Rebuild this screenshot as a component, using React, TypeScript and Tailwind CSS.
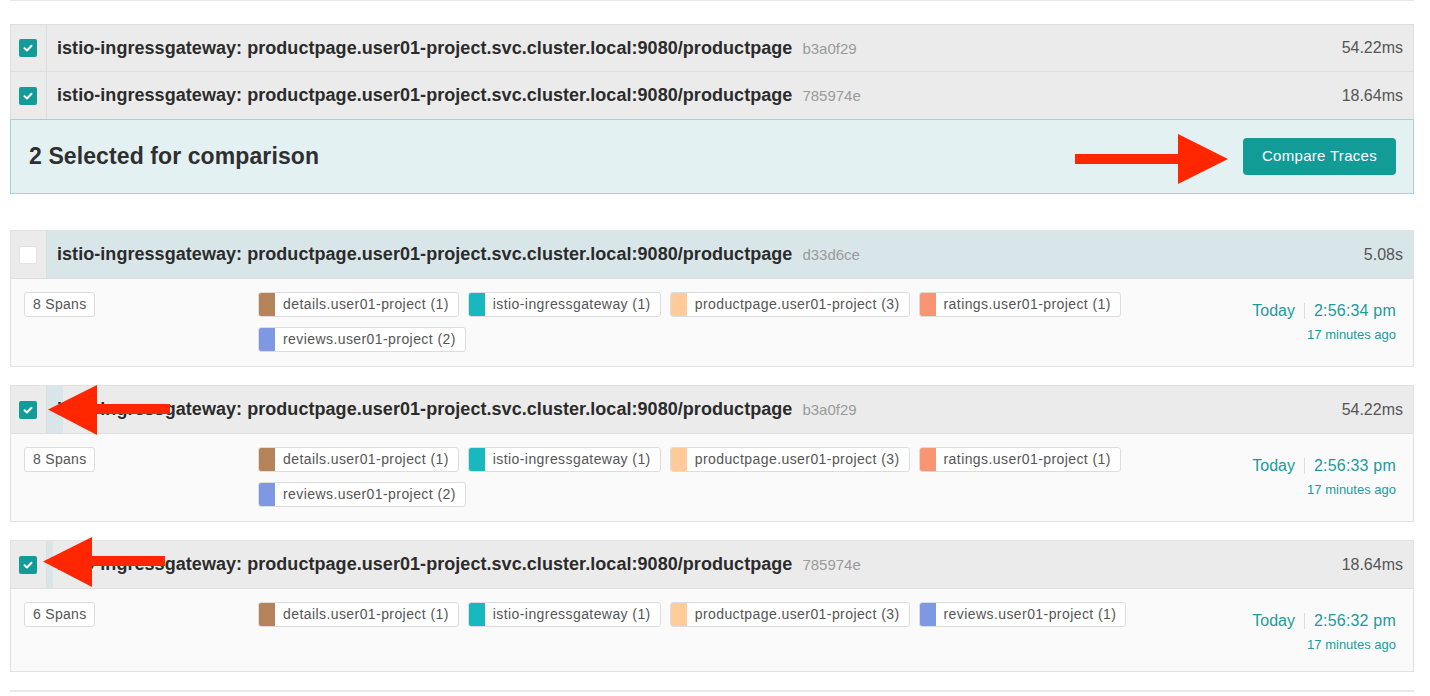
import React from "react";

const FONT = { fontFamily: '"Liberation Sans", Arial, sans-serif' };

type Tag = { name: string; color: string };

function Checkbox({ checked }: { checked: boolean }) {
  if (!checked)
    return <div className="w-[18px] h-[18px] rounded-[2px] bg-white border border-[#e2e2e2]" />;
  return (
    <div className="w-[18px] h-[18px] rounded-[2px] bg-[#139b98] flex items-center justify-center">
      <svg width="12" height="12" viewBox="0 0 12 12">
        <polyline points="2.5,6.2 5,8.5 9.5,3.8" fill="none" stroke="white" strokeWidth="2" strokeLinecap="round" strokeLinejoin="round" />
      </svg>
    </div>
  );
}

function HeaderRow({
  checked,
  hash,
  duration,
  titleBg,
  strip,
  tall = false,
  borderBottom = true,
}: {
  checked: boolean;
  hash: string;
  duration: string;
  titleBg: string;
  strip?: number;
  tall?: boolean;
  borderBottom?: boolean;
}) {
  return (
    <div className={`flex ${tall ? "h-[48px]" : "h-[47px]"} ${borderBottom ? "border-b border-[#dedede]" : ""}`}>
      <div className="w-[36px] shrink-0 bg-[#ebebeb] border-r border-[#dedede] flex items-center pl-[8px]">
        <Checkbox checked={checked} />
      </div>
      <div className={`relative flex-1 flex items-center pl-[10px] pr-[10px] ${titleBg}`}>
        {strip ? <div className="absolute left-0 top-0 bottom-0 bg-[#d9e6e9]" style={{ width: strip }} /> : null}
        <span className="relative text-[18px] font-semibold text-[#2b2b2b] tracking-[0.05px]">
          istio-ingressgateway: productpage.user01-project.svc.cluster.local:9080/productpage
        </span>
        <span className="relative ml-[10px] text-[15px] text-[#9a9a9a] mt-[2px]">{hash}</span>
        <span className="relative ml-auto text-[16px] text-[#555]">{duration}</span>
      </div>
    </div>
  );
}

function TagChip({ t }: { t: Tag }) {
  return (
    <div className="flex h-[25px] rounded-[3px] border border-[#dddddd] bg-white overflow-hidden">
      <div className="w-[16px] h-full" style={{ backgroundColor: t.color }} />
      <div className="flex items-center pl-[8px] pr-[9px] text-[14px] tracking-[0.42px] text-[#555]">{t.name}</div>
    </div>
  );
}

function Body({ spans, tags, time }: { spans: string; tags: Tag[]; time: string }) {
  return (
    <div className="flex bg-[#fafafa] pl-[13px] pr-[17px] pt-[13px] pb-[14px]">
      <div className="w-[234px] shrink-0">
        <div className="inline-flex items-center h-[25px] px-[8px] rounded-[3px] border border-[#dddddd] bg-white text-[14px] tracking-[0.3px] text-[#555]">
          {spans}
        </div>
      </div>
      <div className="w-[900px] flex flex-wrap gap-x-[9px] gap-y-[10px] content-start">
        {tags.map((t) => (
          <TagChip key={t.name} t={t} />
        ))}
      </div>
      <div className="ml-auto flex flex-col items-end pt-[8px] pb-[3px]">
        <div className="flex items-center leading-[22px] text-[16px] text-[#1b9a9e]">
          <span>Today</span>
          <span className="mx-[9px] w-px h-[16px] bg-[#dcdcdc]" />
          <span className="tracking-[0.2px]">{time}</span>
        </div>
        <div className="mt-[4px] leading-[18px] text-[13px] text-[#1b9a9e]">17 minutes ago</div>
      </div>
    </div>
  );
}

const C = {
  details: "#b5835a",
  istio: "#17b8be",
  product: "#ffcb99",
  ratings: "#f89572",
  reviews: "#7e98e4",
};

const tags8 = (rev: string): Tag[] => [
  { name: "details.user01-project (1)", color: C.details },
  { name: "istio-ingressgateway (1)", color: C.istio },
  { name: "productpage.user01-project (3)", color: C.product },
  { name: "ratings.user01-project (1)", color: C.ratings },
  { name: rev, color: C.reviews },
];

const tags6: Tag[] = [
  { name: "details.user01-project (1)", color: C.details },
  { name: "istio-ingressgateway (1)", color: C.istio },
  { name: "productpage.user01-project (3)", color: C.product },
  { name: "reviews.user01-project (1)", color: C.reviews },
];

function Arrow({ dir, left, top }: { dir: "left" | "right"; left: number; top: number }) {
  if (dir === "right")
    return (
      <svg className="absolute" style={{ left, top }} width="153" height="50" viewBox="0 0 153 50">
        <rect x="0" y="20" width="104" height="10" fill="#ff2600" />
        <polygon points="103,0 153,25 103,50" fill="#ff2600" />
      </svg>
    );
  return (
    <svg className="absolute" style={{ left, top }} width="122" height="50" viewBox="0 0 122 50">
      <rect x="48" y="19" width="74" height="10" fill="#ff2600" />
      <polygon points="0,24.5 49,0 49,50" fill="#ff2600" />
    </svg>
  );
}

export default function App() {
  return (
    <div className="relative w-[1430px] h-[696px] overflow-hidden bg-white" style={FONT}>
      <div className="pl-[10px] pr-[16px]">
        <div className="h-px bg-[#e8e8e8]" />

        <div className="mt-[23px] border border-[#dedede] border-b-0">
          <HeaderRow checked hash="b3a0f29" duration="54.22ms" titleBg="bg-[#ebebeb]" />
          <HeaderRow checked hash="785974e" duration="18.64ms" titleBg="bg-[#ebebeb]" borderBottom={false} />
        </div>
        <div className="h-[75px] border border-[#9fd5d5] bg-[#e3f1f2] flex items-center pl-[18px] pr-[17px]">
          <span className="text-[23px] font-semibold text-[#2f2f2f] tracking-[0.1px]">2 Selected for comparison</span>
          <button className="ml-auto w-[153px] h-[37px] rounded-[4px] bg-[#139b98] text-white text-[15px] tracking-[0.3px]">
            Compare Traces
          </button>
        </div>

        <div className="mt-[36px] border border-[#e2e2e2]">
          <HeaderRow tall checked={false} hash="d33d6ce" duration="5.08s" titleBg="bg-[#d9e6e9]" />
          <Body spans="8 Spans" tags={tags8("reviews.user01-project (2)")} time="2:56:34 pm" />
        </div>

        <div className="mt-[18px] border border-[#e2e2e2]">
          <HeaderRow tall checked hash="b3a0f29" duration="54.22ms" titleBg="bg-[#ebebeb]" strip={16} />
          <Body spans="8 Spans" tags={tags8("reviews.user01-project (2)")} time="2:56:33 pm" />
        </div>

        <div className="mt-[18px] border border-[#e2e2e2]">
          <HeaderRow tall checked hash="785974e" duration="18.64ms" titleBg="bg-[#ebebeb]" strip={6} />
          <Body spans="6 Spans" tags={tags6} time="2:56:32 pm" />
        </div>

        <div className="mt-[18px] h-[2px] bg-[#e8e8e8]" />
      </div>

      <Arrow dir="right" left={1075} top={134} />
      <Arrow dir="left" left={48} top={385} />
      <Arrow dir="left" left={43} top={537} />
    </div>
  );
}
